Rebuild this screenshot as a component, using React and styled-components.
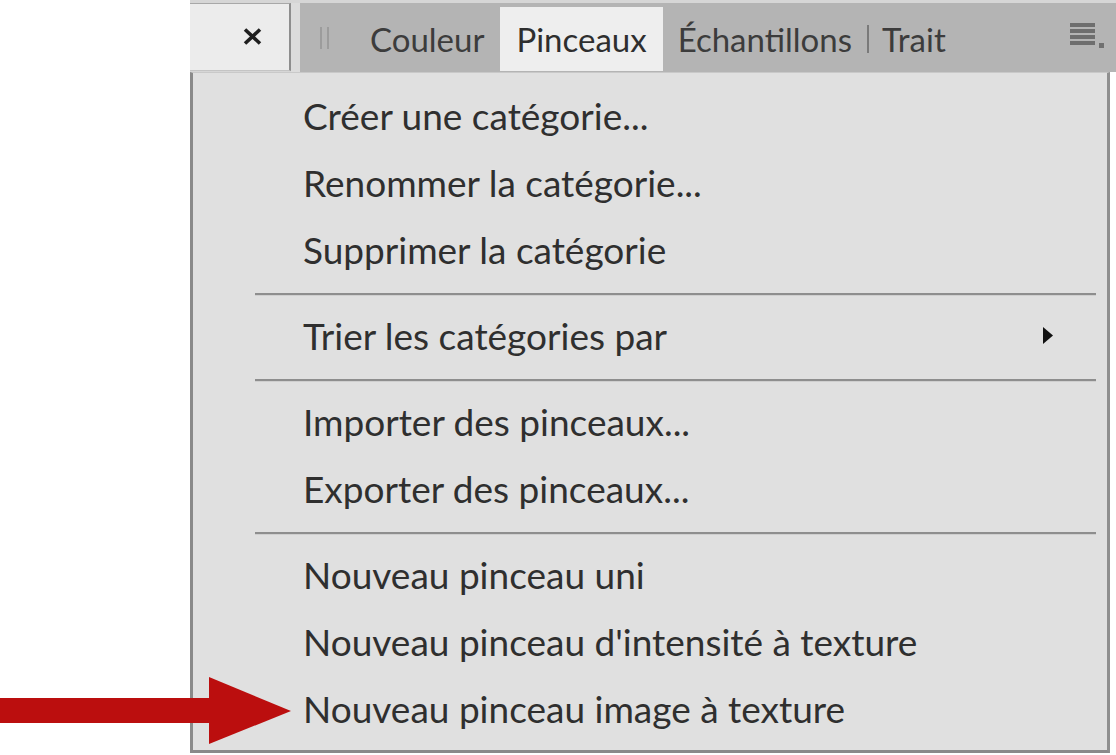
import React from "react";
import styled, { createGlobalStyle } from "styled-components";

const GlobalStyle = createGlobalStyle`
  html, body { margin: 0; padding: 0; background: #ffffff; }
  body { font-family: Lato, "Open Sans", sans-serif; }
`;

const Page = styled.div`
  position: relative;
  width: 1116px;
  height: 755px;
  overflow: hidden;
  background: #ffffff;
  display: flex;
  padding-left: 190px;
  box-sizing: border-box;
`;

const Column = styled.div`
  flex: 1;
  display: flex;
  flex-direction: column;
`;

const TopRow = styled.div`
  height: 72px;
  display: flex;
  background: #d6d6d6;
`;

const CloseTab = styled.div`
  width: 101px;
  margin-top: 3px;
  height: 68px;
  box-sizing: border-box;
  background: #ececec;
  border-top: 1px solid #a8a8a8;
  border-right: 2px solid #8e8e8e;
  border-bottom: 1px solid #c4c4c4;
  display: flex;
  align-items: center;
  justify-content: flex-end;
  padding-right: 27px;
  padding-bottom: 2px;
`;

const Gap = styled.div`
  width: 9px;
  margin-top: 3px;
  background: #dcdcdc;
`;

const TabBar = styled.div`
  flex: 1;
  margin-top: 3px;
  height: 69px;
  background: #b4b4b4;
  display: flex;
  align-items: stretch;
  padding-left: 20px;
  font-family: Lato, sans-serif;
  font-size: 33px;
  color: #3a3a3a;
`;

const Grip = styled.div`
  display: flex;
  align-items: center;
  gap: 5px;
  width: 34px;
  span {
    width: 2px;
    height: 22px;
    background: #9c9c9c;
  }
`;

const Tab = styled.div`
  display: flex;
  align-items: center;
  padding: 0 ${(p) => p.$pad ?? 16}px;
  margin: 4px 0 1px;
  background: ${(p) => (p.$active ? "#eeeeee" : "transparent")};
  color: ${(p) => (p.$active ? "#2e2e2e" : "#3c3c3c")};
  white-space: nowrap;
`;

const TabSep = styled.span`
  display: inline-block;
  width: 2px;
  height: 28px;
  background: #7a7a7a;
  margin: 0 13px 0 15px;
  vertical-align: middle;
`;

const MenuIcon = styled.div`
  margin-left: auto;
  margin-right: 11px;
  margin-bottom: 4px;
  display: flex;
  align-items: center;
`;

const Menu = styled.div`
  width: 920px;
  height: 681px;
  box-sizing: border-box;
  background: #e0e0e0;
  border-top: 1px solid #c9c9c9;
  border-left: 3px solid #8a8a8a;
  border-right: 3px solid #8f8f8f;
  border-bottom: 3px solid #8a8a8a;
  padding-top: 9px;
  display: flex;
  flex-direction: column;
  font-family: Lato, sans-serif;
  font-size: 37px;
  color: #2f2f2f;
`;

const Item = styled.div`
  height: 67px;
  line-height: 67px;
  padding-left: 110px;
  padding-right: 54px;
  display: flex;
  align-items: center;
  justify-content: space-between;
  white-space: nowrap;
`;

const Separator = styled.div`
  height: 2px;
  margin: 10px 11px 7px 62px;
  background: #8e8e8e;
  box-shadow: 0 1px 0 #cfcfcf;
`;

const Arrow = styled.svg`
  position: absolute;
  left: 0;
  top: 677px;
`;

const groups = [
  ["Créer une catégorie...", "Renommer la catégorie...", "Supprimer la catégorie"],
  [{ label: "Trier les catégories par", sub: true }],
  ["Importer des pinceaux...", "Exporter des pinceaux..."],
  [
    "Nouveau pinceau uni",
    "Nouveau pinceau d'intensité à texture",
    "Nouveau pinceau image à texture",
  ],
];

export default function App() {
  return (
    <>
      <GlobalStyle />
      <Page>
        <Column>
          <TopRow>
            <CloseTab>
              <svg width="19" height="17" viewBox="0 0 19 17">
                <path d="M2 1.5 L17 15.5 M17 1.5 L2 15.5" stroke="#1f1f1f" strokeWidth="3.6" strokeLinecap="butt" />
              </svg>
            </CloseTab>
            <Gap />
            <TabBar>
              <Grip>
                <span />
                <span />
              </Grip>
              <Tab>Couleur</Tab>
              <Tab $active>Pinceaux</Tab>
              <Tab $pad={15}>
                Échantillons
                <TabSep />
                Trait
              </Tab>
              <MenuIcon>
                <svg width="36" height="26" viewBox="0 0 36 26">
                  <rect x="1" y="0" width="25" height="4" fill="#6e6e6e" />
                  <rect x="1" y="6" width="25" height="4" fill="#6e6e6e" />
                  <rect x="1" y="12" width="25" height="4" fill="#6e6e6e" />
                  <rect x="1" y="18" width="25" height="4" fill="#6e6e6e" />
                  <rect x="30" y="20" width="5" height="5" fill="#707070" />
                </svg>
              </MenuIcon>
            </TabBar>
          </TopRow>
          <Menu>
            {groups.map((g, gi) => (
              <React.Fragment key={gi}>
                {gi > 0 && <Separator />}
                {g.map((it) => {
                  const label = typeof it === "string" ? it : it.label;
                  const sub = typeof it !== "string" && it.sub;
                  return (
                    <Item key={label}>
                      <span>{label}</span>
                      {sub && (
                        <svg width="10" height="17" viewBox="0 0 10 17">
                          <polygon points="0,0 10,8.5 0,17" fill="#111" />
                        </svg>
                      )}
                    </Item>
                  );
                })}
              </React.Fragment>
            ))}
          </Menu>
        </Column>
        <Arrow width="292" height="68" viewBox="0 0 292 68">
          <rect x="0" y="21" width="212" height="25" fill="#bb0e0e" />
          <polygon points="209,0 291,34 209,67" fill="#bb0e0e" />
        </Arrow>
      </Page>
    </>
  );
}
